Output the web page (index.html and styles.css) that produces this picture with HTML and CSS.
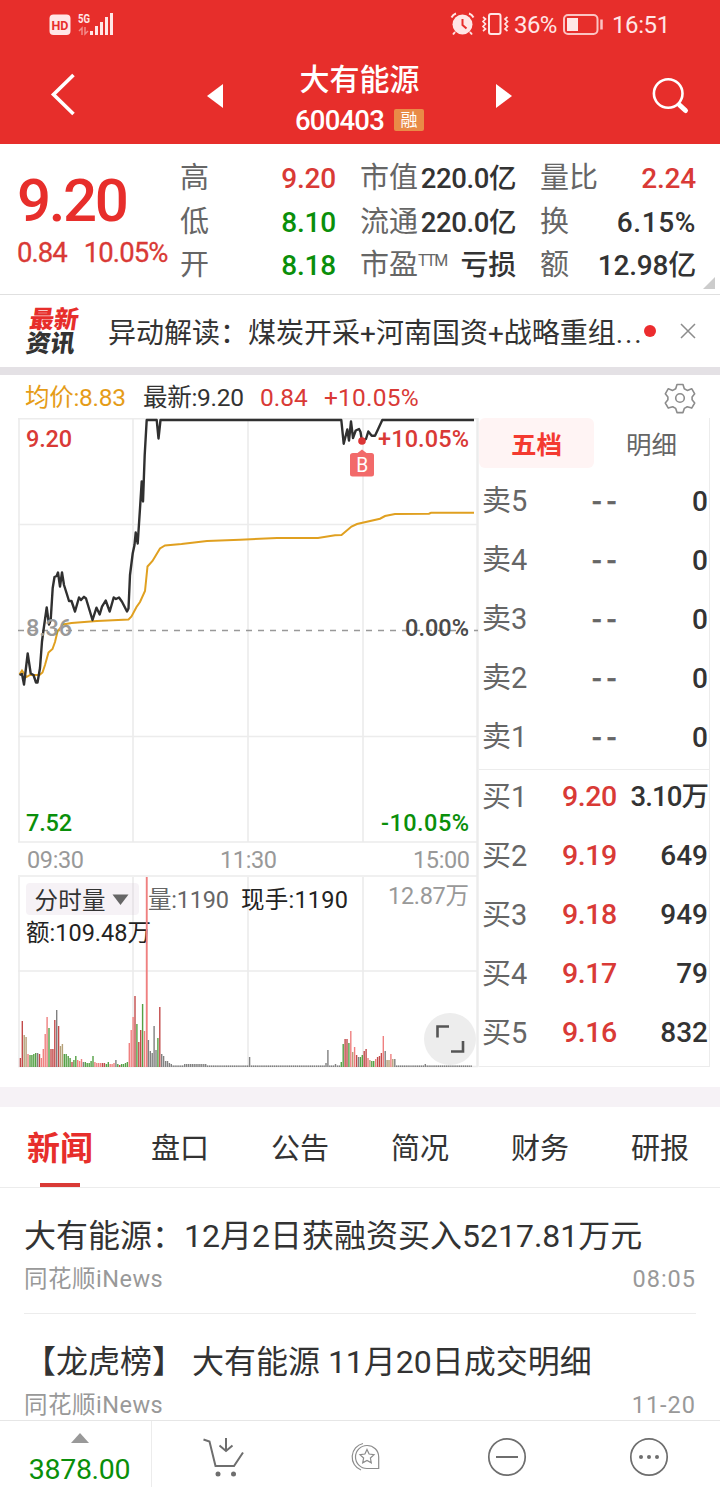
FILE: index.html
```html
<!DOCTYPE html>
<html lang="zh-CN">
<head>
    <meta charset="UTF-8">
    <meta name="viewport" content="width=device-width, initial-scale=1.0">
    <title>大有能源 600403</title>
    <link rel="stylesheet" href="styles.css">
</head>
<body>
    <div class="header">
        <div class="status">
            <svg class="status-l" width="70" height="28" viewBox="48 10 70 28">
                <rect x="49.500" y="14.500" width="21" height="20.500" rx="4" fill="#ffe6e6"/>
                <text x="51.500" y="30" font-size="13" font-weight="700" fill="#e72e2b" textLength="17" lengthAdjust="spacingAndGlyphs">HD</text>
                <text x="78" y="23" font-size="13.500" font-weight="700" fill="#ffe6e6" textLength="12" lengthAdjust="spacingAndGlyphs">5G</text>
                <path d="M79 31l3-3v7M85 27v7l3-3" fill="none" stroke="#f28b89" stroke-width="1.500"/>
                <path d="M91.500 35v-4M96.500 35v-9M101.500 35v-13M106.500 35v-18M111.500 35v-22" stroke="#ffe6e6" stroke-width="3"/>
            </svg>
            <div class="status-r">
                <svg width="60" height="28" viewBox="450 10 60 28">
                    <circle cx="462.500" cy="24.500" r="10" fill="#ffe6e6"/>
                    <path d="M462.500 19v6l4 3.500" fill="none" stroke="#e72e2b" stroke-width="2"/>
                    <path d="M451.500 17.500q1.500-3 4.500-4M473.500 17.500q-1.500-3-4.500-4M455 32l-2 2.500M470 32l2 2.500" fill="none" stroke="#ffe6e6" stroke-width="2"/>
                    <rect x="489" y="14" width="11.500" height="20" rx="2" fill="none" stroke="#ffe6e6" stroke-width="2"/>
                    <path d="M483 17l2.500 2-2.500 2.500 2.500 2.500-2.500 2.500 2.500 2.500-2.500 2M507.500 17l-2.500 2 2.500 2.500-2.500 2.500 2.500 2.500-2.500 2.500 2.500 2" fill="none" stroke="#ffe6e6" stroke-width="1.700"/>
                </svg>
                <span class="percent">36%</span>
                <svg width="42" height="24" viewBox="562 12 42 24">
                    <rect x="564" y="15" width="33.500" height="19" rx="4" fill="none" stroke="#fbc4c3" stroke-width="2"/>
                    <rect x="567" y="18" width="11" height="13" fill="#ffe6e6"/>
                    <path d="M601.500 19.500v10" stroke="#fbc4c3" stroke-width="2.500"/>
                </svg>
                <span class="clock">16:51</span>
            </div>
        </div>
        <div class="nav">
            <svg class="back" width="30" height="46" viewBox="48 71 30 46">
                <path d="M73.500 75L53.500 94.500l20 19.500" fill="none" stroke="#fff" stroke-width="3.600"/>
            </svg>
            <i class="prev"></i>
            <div class="stock">
                <h1>大有能源</h1>
                <p><b>600403</b><em>融</em></p>
            </div>
            <i class="next"></i>
            <svg class="search" width="40" height="40" viewBox="650 76 40 40">
                <circle cx="668.200" cy="93.500" r="14.300" fill="none" stroke="#fff" stroke-width="2.600"/>
                <path d="M678 103.500l2 2" stroke="#fff" stroke-width="3"/>
                <path d="M679.500 105l6 5.500" stroke="#fff" stroke-width="5" stroke-linecap="round"/>
            </svg>
        </div>
    </div>

    <div class="quote">
        <div class="now">
            <strong>9.20</strong>
            <p><span>0.84</span><span>10.05%</span></p>
        </div>
        <ul class="stats">
            <li><span>高</span><b class="up">9.20</b></li>
            <li><span>市值</span><b class="cap">220.0亿</b></li>
            <li><span>量比</span><b class="up">2.24</b></li>
            <li><span>低</span><b class="down">8.10</b></li>
            <li><span>流通</span><b class="cap">220.0亿</b></li>
            <li><span>换</span><b class="turn">6.15%</b></li>
            <li><span>开</span><b class="down">8.18</b></li>
            <li><span>市盈<sup>TTM</sup></span><b>亏损</b></li>
            <li><span>额</span><b>12.98亿</b></li>
        </ul>
        <i class="corner"></i>
    </div>

    <div class="notice">
        <div class="latest"><span>最新</span><span>资讯</span></div>
        <p>异动解读：煤炭开采+河南国资+战略重组<span>...</span></p>
        <i class="dot"></i>
        <svg width="16" height="16" viewBox="0 0 16 16">
            <path d="M1 1l14 14M15 1L1 15" stroke="#8c8c8c" stroke-width="1.500"/>
        </svg>
    </div>

    <div class="legend">
        <span class="avg">均价:8.83</span>
        <span class="last">最新:9.20</span>
        <span class="diff">0.84</span>
        <span class="rate">+10.05%</span>
        <svg width="34" height="34" viewBox="663 381 34 34" fill="none" stroke="#8c8c8c" stroke-width="1.600">
            <path stroke-linejoin="round" d="M677 384.500h6l1.300 4.200 3 1.700 4.400-1.700 3 5.100-2.600 3.200v2.800l2.600 3.200-3 5.100-4.400-1.400-3 1.700-1.300 4.200h-6l-1.300-4.200-3-1.700-4.400 1.400-3-5.100 2.600-3.200v-2.800l-2.600-3.200 3-5.100 4.400 1.700 3-1.700z"/>
            <circle cx="680" cy="398" r="4.300"/>
        </svg>
    </div>

    <div class="market">
        <svg class="chart" width="461" height="650" viewBox="18 418 461 650">
            <!-- 网格 -->
            <g class="grid">
                <path d="M19 418.500V842M133 418.500V842M248 418.500V842M363 418.500V842M19 877V1067M133 877V1067M248 877V1067M363 877V1067"/>
                <path d="M18 418.800H478M18 524.500H478M18 736.500H478M18 842H478M18 876H478M18 971H478M18 1066.500H478"/>
                <path d="M477.500 418V1067" stroke-width="2.500"/>
            </g>
            <path d="M18 630.500H478" stroke="#999" stroke-width="1.500" stroke-dasharray="6 6"/>
            <path class="line-avg" d="M19.500 674.500L22 670.500L26.500 677L30 675H39.500L42.500 672.500L45 665L48.500 652.500L52.500 649L55 642L57.500 631.500L63 624.500L71.500 623L97 621L128.500 619.500L131.500 616.500L136.500 607L140 602L145 591L147.500 566.500L152.500 561L160 548.500L165 545.500L181.500 544L207 541L240 539.700L277 538H318L335 535.200L341.500 535L351.500 526.500L357 524L380 518.700L385 516L395 514L429 513.700L431 512.800H474"/>
            <path class="line-price" d="M19.500 675L22 674L24 684.500L27.700 653.500L30.700 673.500L33.500 675L36 682.500H37.500L40 668L42 641.500L43.500 630L46.700 607.500L49 624.500L50.700 620L52.700 588L54.500 577L56.700 576L58 572.500L60 586.500L62 572.500L64 585L66.700 593.500L69 601H71.500L75 611.500L79 597.500L81 600L84 596.800L86 598.500L92.500 620L96.500 607.700L99.700 614.500L102 606.700L105.700 600.500L109.700 611.500L113.700 597.500L116 599L119 597.500L122 601.700L127 611.500L128.500 608.500L130 575L132.700 553.500L134.500 545L135.700 532.500L137.700 543.500L140 508.500L141.700 481.500L143 501.500L144.700 455L146.700 420H156.700L158.500 438.500L160.500 420H341.300L343.700 443.700L347.300 429.500L349 440.500L351 421.500L353 438L355.700 430.500L359 429L360.500 432L362 441L366 439L368.300 431.500L371.700 435.700H375L377.700 430L382.300 420H474"/>
            <g class="num mid">
                <text x="26" y="636" textLength="46" fill="#999">8.36</text>
                <text x="405" y="636" textLength="64" fill="#4a4a4a">0.00%</text>
            </g>
            <circle cx="362" cy="441" r="3.800" fill="#db3535"/>
            <path d="M353 453h4.500l4.500-3.500 4.500 3.500h5q2.500 0 2.500 2.500v18.500q0 2.500-2.500 2.500h-19q-2.500 0-2.500-2.500v-18.500q0-2.500 3-2.500z" fill="#f26a6a"/>
            <text x="356.300" y="472" font-size="20" fill="#fff" textLength="12" lengthAdjust="spacingAndGlyphs">B</text>
            <g class="num strong">
                <text x="26" y="447" textLength="46" fill="#d93a36">9.20</text>
                <text x="378" y="447" textLength="91" fill="#d93a36">+10.05%</text>
                <text x="26" y="831" textLength="46" fill="#0a8f0a">7.52</text>
                <text x="381" y="831" textLength="88" fill="#0a8f0a">-10.05%</text>
            </g>
            <g class="num time">
                <text x="27" y="868" textLength="57">09:30</text>
                <text x="220" y="868" textLength="57">11:30</text>
                <text x="413" y="868" textLength="57">15:00</text>
            </g>
            <!-- 分时量 -->
            <rect x="26" y="883" width="113" height="32" rx="4" fill="#f6f2f6"/>
            <path d="M133 883V915" stroke="#e4e1e4" stroke-width="1.500"/>
            <g class="num">
                <text x="34.500" y="909" textLength="71" fill="#333">分时量</text>
                <path d="M112.500 894.500h16l-8 10.500z" fill="#666"/>
                <text x="148" y="908" textLength="81" fill="#666">量:1190</text>
                <text x="241" y="908" textLength="107" fill="#222">现手:1190</text>
                <text x="388" y="904" textLength="81" fill="#999">12.87万</text>
                <text x="26" y="941" textLength="125" fill="#222">额:109.48万</text>
            </g>
            <g id="volume"></g>
            <circle cx="450" cy="1039" r="26" fill="#ededed"/>
            <path d="M437.500 1037.500v-11h11.500M463 1041v10.500h-12" fill="none" stroke="#555" stroke-width="2.600"/>
        </svg>
        <div class="book">
            <div class="book-tabs"><span class="active">五档</span><span>明细</span></div>
            <ul class="sell">
                <li><span>卖5</span><i>--</i><b>0</b></li>
                <li><span>卖4</span><i>--</i><b>0</b></li>
                <li><span>卖3</span><i>--</i><b>0</b></li>
                <li><span>卖2</span><i>--</i><b>0</b></li>
                <li><span>卖1</span><i>--</i><b>0</b></li>
            </ul>
            <ul class="buy">
                <li><span>买1</span><i>9.20</i><b class="wan">3.10万</b></li>
                <li><span>买2</span><i>9.19</i><b>649</b></li>
                <li><span>买3</span><i>9.18</i><b>949</b></li>
                <li><span>买4</span><i>9.17</i><b>79</b></li>
                <li><span>买5</span><i>9.16</i><b>832</b></li>
            </ul>
        </div>
    </div>

    <ul class="tabs">
        <li class="active">新闻</li>
        <li>盘口</li>
        <li>公告</li>
        <li>简况</li>
        <li>财务</li>
        <li>研报</li>
    </ul>

    <ul class="news">
        <li>
            <h2>大有能源：12月2日获融资买入5217.81万元</h2>
            <p><span>同花顺iNews</span><span class="date">08:05</span></p>
        </li>
        <li>
            <h2>【龙虎榜】 大有能源 11月20日成交明细</h2>
            <p><span>同花顺iNews</span><span class="date">11-20</span></p>
        </li>
    </ul>

    <div class="toolbar">
        <div class="index"><i></i><span>3878.00</span></div>
        <div class="tool">
            <svg width="44" height="44" viewBox="201 1435 44 44" fill="none" stroke="#6e6e6e" stroke-width="2">
                <path d="M203.500 1439.500l6 2 6 24.500h18.500l9-13.500M226 1438v13M219.500 1445.500l6.500 5.500 6.500-5.500"/>
                <circle cx="218" cy="1474" r="2.500" fill="#6e6e6e" stroke="none"/>
                <circle cx="233.500" cy="1474" r="2.500" fill="#6e6e6e" stroke="none"/>
            </svg>
        </div>
        <div class="tool">
            <svg width="44" height="44" viewBox="343 1435 44 44" fill="none" stroke="#8c8c8c" stroke-width="1.200">
                <path d="M367 1445.500a11.500 11.500 0 0 1 11.700 11.500v11.500H367a11.500 11.500 0 0 1 0-23z"/>
                <path d="M363 1443.500a13.900 13.900 0 0 0-2 26.500"/>
                <path d="M367 1449.500l2.100 4.500 4.900.6-3.600 3.400.9 4.800-4.300-2.400-4.300 2.400.9-4.800-3.600-3.400 4.900-.6z"/>
            </svg>
        </div>
        <div class="tool">
            <svg width="44" height="44" viewBox="485 1435 44 44" fill="none" stroke="#6e6e6e" stroke-width="1.700">
                <circle cx="507" cy="1457" r="18.200"/>
                <path d="M496 1457h22" stroke-width="2"/>
            </svg>
        </div>
        <div class="tool">
            <svg width="44" height="44" viewBox="627 1435 44 44" fill="#6e6e6e">
                <circle cx="649" cy="1457" r="18.200" fill="none" stroke="#6e6e6e" stroke-width="1.700"/>
                <circle cx="641" cy="1457" r="2"/>
                <circle cx="649" cy="1457" r="2"/>
                <circle cx="657" cy="1457" r="2"/>
            </svg>
        </div>
    </div>
    <script src="volume.js"></script>
</body>
</html>
```

FILE: styles.css
```css
*{
    margin: 0;
    padding: 0;
    box-sizing: border-box;
}
ul{
    list-style: none;
}
i,em{
    font-style: normal;
}
svg{
    display: block;
    flex: none;
}
body{
    width: 720px;
    height: 1487px;
    overflow: hidden;
    background-color: #fff;
    color: #333;
    font-family: Roboto,"Noto Sans CJK SC",sans-serif;
}
.header{
    height: 144px;
    background-color: #e72e2b;
    color: #fff;
}
.status{
    display: flex;
    justify-content: space-between;
    height: 48px;
    padding: 10px 51px 0 48px;
}
.status-r{
    display: flex;
    align-items: flex-start;
    color: #ffe6e6;
    font-size: 24px;
    line-height: 30px;
}
.status-r .percent{
    width: 48px;
    margin-left: 4px;
    letter-spacing: -0.6px;
}
.status-r svg + .clock{
    width: 57px;
    margin-left: 8px;
    letter-spacing: -0.4px;
}
.status-r .percent + svg{
    margin-top: 2px;
}
.nav{
    display: flex;
    height: 96px;
    padding-left: 48px;
}
.nav .back{
    margin-top: 23px;
}
.nav .prev,.nav .next{
    width: 16px;
    height: 24px;
    margin-top: 36px;
    background-color: #fff;
}
.nav .prev{
    margin-left: 129px;
    clip-path: polygon(100% 0,100% 100%,0 50%);
}
.nav .next{
    clip-path: polygon(0 0,0 100%,100% 50%);
}
.nav .search{
    margin: 28px 0 0 138px;
}
.stock{
    width: 273px;
    text-align: center;
}
.stock h1{
    height: 56px;
    font-size: 30px;
    font-weight: 500;
    line-height: 63px;
}
.stock p{
    display: flex;
    justify-content: center;
    align-items: center;
    height: 32px;
}
.stock b{
    font-size: 27.5px;
    font-weight: 500;
    letter-spacing: -0.8px;
}
.stock em{
    width: 30px;
    height: 22px;
    margin-left: 10px;
    border-radius: 2px;
    background-color: #e98b47;
    font-size: 17px;
    line-height: 22px;
}
.quote{
    display: flex;
    position: relative;
    height: 151px;
    padding-top: 12px;
    border-bottom: 1px solid #e0e0e0;
}
.now{
    width: 180px;
    padding-left: 17px;
    color: #d93a36;
}
.now strong{
    display: block;
    height: 75px;
    color: #e72e2b;
    font-size: 60px;
    font-weight: 500;
    line-height: 90px;
    letter-spacing: -2.4px;
}
.now p{
    display: flex;
    gap: 17px;
    font-size: 27.5px;
    line-height: 43px;
    letter-spacing: -0.95px;
    -webkit-text-stroke: 0.3px #d93a36;
}
.stats{
    display: grid;
    grid-template-columns: 156px 156px 156px;
    grid-template-rows: repeat(3,43.5px);
    column-gap: 24px;
}
.stats li{
    display: flex;
    justify-content: space-between;
    white-space: nowrap;
    font-size: 28px;
    line-height: 45px;
}
.stats span{
    color: #666;
    font-size: 29px;
}
.stats sup{
    display: inline-block;
    font-size: 16px;
    line-height: 16px;
    font-weight: 400;
    letter-spacing: -1.5px;
    vertical-align: 9px;
}
.stats b{
    font-weight: 500;
    letter-spacing: -0.2px;
}
.stats .cap{
    font-size: 27.5px;
    letter-spacing: -0.4px;
}
.stats .turn{
    letter-spacing: 0.6px;
}
.stats .up{
    color: #d93a36;
}
.stats .down{
    color: #0a8f0a;
}
.quote .corner{
    position: absolute;
    right: 5px;
    bottom: 5px;
    width: 12px;
    height: 12px;
    background-color: #ccc;
    clip-path: polygon(100% 0,100% 100%,0 100%);
}
.notice{
    display: flex;
    align-items: center;
    height: 80px;
    padding: 0 24px 0 28px;
    border-bottom: 8px solid #e4e1e5;
}
.latest{
    width: 52px;
    padding-top: 2px;
    transform: skewX(-8deg);
    font-size: 24.5px;
    font-weight: 900;
    line-height: 24px;
}
.latest span{
    display: block;
}
.latest span:first-child{
    color: #e72e2b;
}
.notice p{
    width: 536px;
    margin-left: 28px;
    white-space: nowrap;
    font-size: 28px;
}
.notice p span{
    letter-spacing: 1.8px;
}
.notice .dot{
    width: 12px;
    height: 12px;
    border-radius: 50%;
    background-color: #ec2c2e;
}
.notice svg{
    margin-left: 24px;
}
.legend{
    display: flex;
    height: 43px;
    padding: 1px 23px 0 25px;
    font-size: 24.5px;
    line-height: 43px;
    white-space: nowrap;
}
.legend .avg{
    width: 118px;
    color: #e59c18;
    letter-spacing: -0.3px;
}
.legend .last{
    width: 117px;
    letter-spacing: -0.3px;
}
.legend .diff{
    width: 64px;
    color: #d93a36;
}
.legend .rate{
    color: #d93a36;
    letter-spacing: 0.2px;
}
.legend svg{
    margin: 5px 0 0 auto;
}
.market{
    display: flex;
    height: 689px;
    padding-left: 18px;
    border-bottom: 20px solid #f6f2f6;
}
.grid{
    fill: none;
    stroke: #ececec;
    stroke-width: 1.6;
}
.line-avg{
    fill: none;
    stroke: #e0a020;
    stroke-width: 2;
}
.line-price{
    fill: none;
    stroke: #303030;
    stroke-width: 2.4;
    stroke-linejoin: round;
}
.num{
    font-size: 23.5px;
}
.mid,.strong{
    font-weight: 500;
}
.time{
    fill: #999;
}
.book{
    width: 231px;
    height: 649px;
    border-right: 1px solid #ececec;
    border-bottom: 1px solid #ececec;
}
.book-tabs{
    display: flex;
    height: 50px;
    font-size: 25.5px;
    line-height: 54px;
    text-align: center;
    color: #666;
}
.book-tabs span{
    width: 115px;
}
.book-tabs .active{
    border-radius: 6px;
    background-color: #fff4f4;
    color: #f43a30;
    font-weight: 700;
}
.book ul{
    padding-top: 4px;
}
.book .buy{
    padding-top: 0;
    border-top: 1px solid #ececec;
}
.book .sell{
    height: 301px;
}
.book li{
    display: flex;
    height: 59px;
    padding: 0 1px 0 3px;
    font-size: 29px;
    line-height: 59px;
    white-space: nowrap;
}
.book .buy li{
    line-height: 54px;
}
.book li span{
    width: 80px;
    color: #666;
}
.book li i{
    width: 56px;
    color: #d93a36;
    font-size: 28.5px;
    font-weight: 500;
    letter-spacing: -0.4px;
}
.book .sell i{
    padding-left: 30px;
    color: #666;
    letter-spacing: 5px;
    -webkit-text-stroke: 0.6px #666;
}
.book li b{
    margin-left: auto;
    font-weight: 500;
    font-size: 28px;
}
.book li .wan{
    font-size: 27.5px;
    letter-spacing: -0.9px;
}
.tabs{
    display: flex;
    height: 81px;
    border-bottom: 1px solid #ececec;
    font-size: 29px;
    line-height: 84px;
    text-align: center;
}
.tabs li{
    position: relative;
    width: 120px;
}
.tabs .active{
    color: #e72e2b;
    font-size: 33px;
    font-weight: 700;
}
.tabs .active::after{
    content: "";
    position: absolute;
    left: 40px;
    bottom: 0;
    width: 40px;
    height: 4px;
    background-color: #d93a36;
}
.news{
    height: 232px;
    padding: 0 24px;
    overflow: hidden;
}
.news li{
    height: 126px;
    padding-top: 26px;
    border-bottom: 1px solid #ececec;
}
.news h2{
    height: 44px;
    font-size: 32px;
    font-weight: 400;
    line-height: 45px;
    white-space: nowrap;
}
.news p{
    display: flex;
    justify-content: space-between;
    color: #999;
    font-size: 23.5px;
    line-height: 42px;
    letter-spacing: 0.5px;
}
.news .date{
    letter-spacing: 1px;
}
.toolbar{
    display: flex;
    position: relative;
    height: 67px;
    border-top: 1px solid #e6e6e6;
    background-color: #fff;
}
.toolbar .index{
    width: 152px;
    padding: 12px 0 0 8px;
    border-right: 1px solid #ececec;
    text-align: center;
    color: #0a8f0a;
    font-size: 28.5px;
    letter-spacing: -0.3px;
}
.toolbar .index i{
    display: block;
    width: 18px;
    height: 10px;
    margin: 0 auto 3px 63px;
    background-color: #999;
    clip-path: polygon(50% 0,100% 100%,0 100%);
}
.toolbar .index span{
    display: block;
    line-height: 47px;
}
.tool{
    width: 142px;
    padding: 14px 49px;
}
```

FILE: volume.js
```javascript
// 每分钟成交量: 颜色 + 高度, 空位为平量
var colors = {R:'#ef8080', D:'#c24a4a', G:'#55a045', T:'#b5a078', K:'#808080'};
var data = 'D9 D46 T32 T30 R13 G12 G12 G13 G14 K14 D13 R9 R18 R33 R50 G39 D18 D18 D47 K57 D41 T21 T23 G13 G13 G11 G9 D5 G7 G11 ' +
    'R7 R6 R8 K5 G5 G4 G4 G6 G11 R5 R4 R4 R4 D4 D4 G3 G5 R3 R3 R4 K7 G3 D2 G3 G3 G4 G5 R24 R37 R50 ' +
    'D71 G43 D25 D37 G63 R36 R190 K27 K16 K14 K41 K17 G29 D60 K13 K11 K6 K6 K4 K3';
var afternoon = 'G5 G23 D28 D28 G24 R36 T15 R20 D12 K10 G10 G12 D16 D18 R9 T7 G6 G6 R8 D10 D11 D14 R31 K16 T7 T7 R13 T8 K8';
var bars = data.split(' ');
while(bars.length < 168){
    bars.push(bars.length > 85 && bars.length < 98 ? 'K3' : 'K1.6');
}
bars[120] = 'K10';
bars[160] = 'K4';
bars[161] = 'K17';
bars[165] = 'K3';
bars = bars.concat(afternoon.split(' '));
while(bars.length < 237){
    bars.push('K1.6');
}
bars[212] = 'K3';

var html = '';
for(var i = 0 ; i < bars.length ; i++){
    var h = parseFloat(bars[i].slice(1));
    var x = 19.7 + i * 1.91;
    // 最大量
    var w = h > 100 ? 1.9 : 1.4;
    html += '<rect x="' + x.toFixed(1) + '" y="' + (1067 - h) + '" width="' + w + '" height="' + h + '" fill="' + colors[bars[i].charAt(0)] + '"/>';
}
document.getElementById('volume').innerHTML = html;
```
